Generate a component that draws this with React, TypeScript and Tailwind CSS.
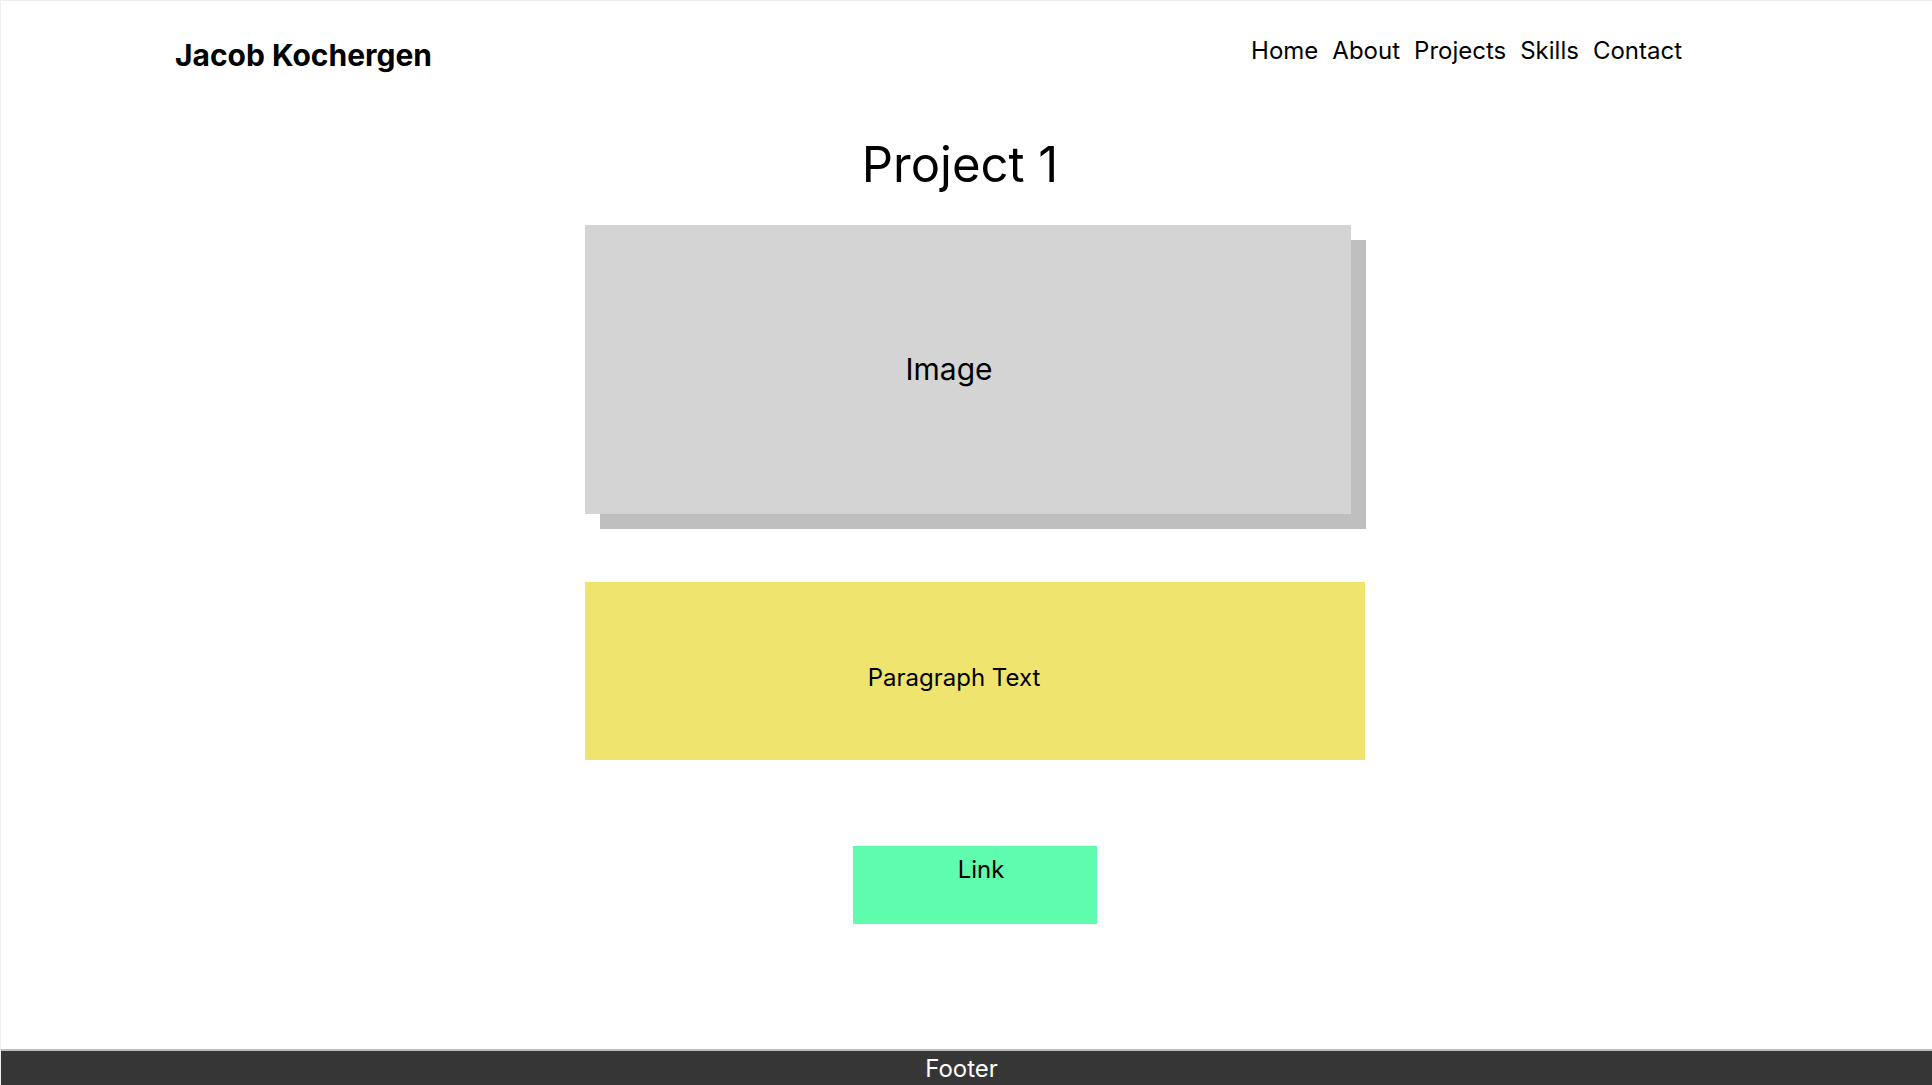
import React from "react";

const font = { fontFamily: "Inter, 'Noto Sans', sans-serif" };

export default function App() {
  return (
    <div
      className="min-h-screen flex flex-col bg-white border-l border-t border-[#eeeeee] text-black"
      style={font}
    >
      <header className="flex items-start justify-between pt-[36px] pl-[174px] pr-[250px]">
        <div className="text-[30px] leading-[36px] font-bold">Jacob Kochergen</div>
        <nav className="flex gap-[14px] text-[24px] leading-[28px]">
          <a>Home</a>
          <a>About</a>
          <a>Projects</a>
          <a>Skills</a>
          <a>Contact</a>
        </nav>
      </header>

      <main className="flex-1 pl-[584px]">
        <div className="w-[780px] flex flex-col items-start">
          <h1 className="mt-[63px] w-[750px] text-center text-[49px] leading-[58px] font-normal">
            Project 1
          </h1>
          <div className="mt-[31px] w-[766px] h-[289px] bg-[#d4d4d4] shadow-[15px_15px_0_#bfbfbf] flex items-center justify-center pr-[38px] text-[30px]">
            Image
          </div>
          <div className="mt-[68px] w-[780px] h-[178px] bg-[#efe46e] flex items-center justify-center pr-[42px] pt-[14px] text-[24px]">
            Paragraph Text
          </div>
          <a className="mt-[86px] ml-[268px] w-[244px] h-[78px] bg-[#60fcae] flex justify-center pl-[12px] pt-[10px] text-[24px] leading-[28px]">
            Link
          </a>
        </div>
      </main>

      <footer className="h-[36px] bg-[#363636] border-t-2 border-[#bdbdbd] flex items-center justify-center pr-[10px] pt-[2px] text-white text-[24px]">
        Footer
      </footer>
    </div>
  );
}
